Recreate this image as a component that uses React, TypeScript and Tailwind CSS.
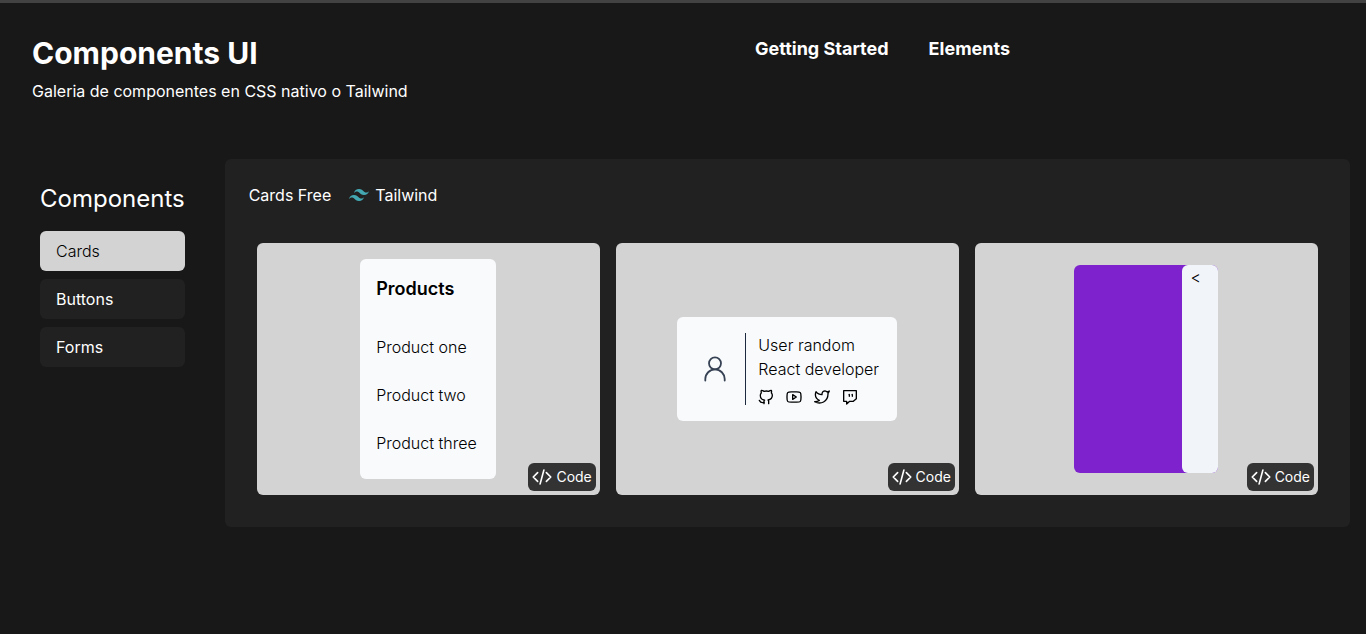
import type { ReactNode } from "react";
import { HiOutlineCodeBracket } from "react-icons/hi2";
import { SiTailwindcss } from "react-icons/si";

const sections = ["Cards", "Buttons", "Forms"];
const products = ["Product one", "Product two", "Product three"];

const socials = [
  {
    label: "GitHub",
    paths: [
      "M16 22.03V19.16C16.04 18.68 15.97 18.2 15.81 17.75C15.65 17.3 15.39 16.89 15.06 16.55C18.2 16.2 21.5 15.01 21.5 9.55C21.5 8.15 20.96 6.81 20 5.8C20.46 4.58 20.42 3.23 19.91 2.03C19.91 2.03 18.73 1.68 16 3.51C13.71 2.89 11.29 2.89 9 3.51C6.27 1.68 5.09 2.03 5.09 2.03C4.58 3.23 4.54 4.58 5 5.8C4.03 6.82 3.49 8.17 3.5 9.58C3.5 15 6.8 16.19 9.94 16.58C9.61 16.92 9.36 17.32 9.2 17.77C9.03 18.21 8.97 18.68 9 19.16V22.03",
      "M9 20.03C6 21 3.5 20.03 2 17.03",
    ],
  },
  {
    label: "YouTube",
    paths: [
      "M15.5 12L10 15.5V8.5L15.5 12Z",
      "M1.5 12.71V11.29C1.5 8 1.5 6.5 2.5 5.4C3.5 4.4 5.24 4.3 8.09 4.2H15.91C18.76 4.3 20.5 4.4 21.5 5.4C22.5 6.5 22.5 8 22.5 11.29V12.71C22.5 16 22.5 17.5 21.5 18.6C20.5 19.6 18.76 19.7 15.91 19.8H8.09C5.24 19.7 3.5 19.6 2.5 18.6C1.5 17.5 1.5 16 1.5 12.71Z",
    ],
  },
  {
    label: "Twitter",
    paths: [
      "M23 3.01C23 3.01 20.98 4.2 19.86 4.54C19.26 3.85 18.46 3.36 17.57 3.13C16.68 2.91 15.74 2.97 14.88 3.29C14.02 3.62 13.29 4.2 12.77 4.96C12.26 5.72 11.99 6.62 12 7.54V8.54C10.24 8.59 8.5 8.2 6.93 7.41C5.36 6.62 4.01 5.45 3 4.01C3 4.01 -1 13.01 8 17.01C5.94 18.41 3.49 19.11 1 19.01C10 24.01 21 19.01 21 7.51C21 7.23 20.97 6.95 20.92 6.68C21.94 5.67 23 3.01 23 3.01Z",
    ],
  },
  {
    label: "Twitch",
    paths: ["M21.5 2.5H2.5V18.5H7V22.5L11.5 18.5H17L21.5 14.5V2.5Z", "M11 8V11", "M15.5 8V11"],
  },
];

function LineIcon({ paths, className }: { paths: string[]; className: string }) {
  return (
    <svg
      viewBox="0 0 24 24"
      className={className}
      fill="none"
      stroke="currentColor"
      strokeWidth={2}
      strokeLinecap="round"
      strokeLinejoin="round"
      aria-hidden="true"
    >
      {paths.map((d) => (
        <path key={d} d={d} />
      ))}
    </svg>
  );
}

function Preview({ children }: { children: ReactNode }) {
  return (
    <article className="relative flex items-center justify-center rounded-md bg-[#d3d3d3] p-4">
      {children}
      <button
        type="button"
        className="absolute right-1 bottom-1 flex h-7 items-center gap-1 rounded-md bg-[#333333] px-1 text-sm text-white"
      >
        <HiOutlineCodeBracket className="size-5 stroke-2" />
        Code
      </button>
    </article>
  );
}

export default function App() {
  return (
    <div className="flex min-h-screen flex-col border-t-3 border-[#424242] bg-[#181818] font-['Inter',sans-serif] text-base text-white">
      <header className="grid grid-cols-2 px-8 pt-8">
        <div>
          <h1 className="text-3xl font-bold">Components UI</h1>
          <p className="mt-2">Galeria de componentes en CSS nativo o Tailwind</p>
        </div>
        <nav className="flex items-start gap-10 pl-18 text-lg font-bold">
          <a href="#getting-started">Getting Started</a>
          <a href="#elements">Elements</a>
        </nav>
      </header>

      <div className="flex items-start px-4 pt-14">
        <aside className="shrink-0 px-6 pt-6">
          <h2 className="text-2xl">Components</h2>
          <nav className="mt-4 flex flex-col gap-2">
            {sections.map((name, i) => (
              <a
                key={name}
                href={`#${name.toLowerCase()}`}
                className={
                  i === 0
                    ? "rounded-md bg-[#d3d3d3] px-4 py-2 font-light text-black"
                    : "rounded-md bg-[#212121] px-4 py-2"
                }
              >
                {name}
              </a>
            ))}
          </nav>
        </aside>

        <main className="ml-4 flex-1 rounded-md bg-[#212121] p-6">
          <div className="flex items-center">
            <h3>Cards Free</h3>
            <SiTailwindcss className="mr-1.5 ml-4.5 size-5 text-[#44a8b3]" />
            <span>Tailwind</span>
          </div>
          <div className="mt-9 grid grid-cols-3 gap-4 px-2 pb-2 text-black">
            <Preview>
              <div className="min-w-34 rounded-md bg-slate-50 px-4 pt-4 pb-6 font-light">
                <h4 className="text-lg font-semibold">Products</h4>
                <ul className="mt-8 flex flex-col gap-6">
                  {products.map((name) => (
                    <li key={name}>{name}</li>
                  ))}
                </ul>
              </div>
            </Preview>
            <Preview>
              <div className="flex min-w-55 rounded-md bg-slate-50 p-4 font-light">
                <div className="flex items-center pr-3 pl-1 text-gray-700">
                  <svg
                    viewBox="0 0 36 36"
                    className="size-9"
                    fill="none"
                    stroke="currentColor"
                    strokeWidth={1.8}
                    strokeLinecap="round"
                    aria-hidden="true"
                  >
                    <circle cx="18" cy="12.3" r="6" />
                    <path d="M8.3 29.5V28.1a9.7 9.7 0 0 1 19.4 0V29.5" />
                  </svg>
                </div>
                <div className="border-l border-slate-800 pl-3">
                  <p>User random</p>
                  <p>React developer</p>
                  <div className="mt-2 flex gap-3">
                    {socials.map(({ label, paths }) => (
                      <a key={label} href={`#${label.toLowerCase()}`} aria-label={label}>
                        <LineIcon className="size-4" paths={paths} />
                      </a>
                    ))}
                  </div>
                </div>
              </div>
            </Preview>
            <Preview>
              <div className="flex h-52 w-36 justify-end rounded-md bg-[#7e22ce]">
                <div className="w-9 rounded-md bg-slate-100 px-2 font-light">
                  <button type="button" aria-label="Expand">&lt;</button>
                </div>
              </div>
            </Preview>
          </div>
        </main>
      </div>
    </div>
  );
}
